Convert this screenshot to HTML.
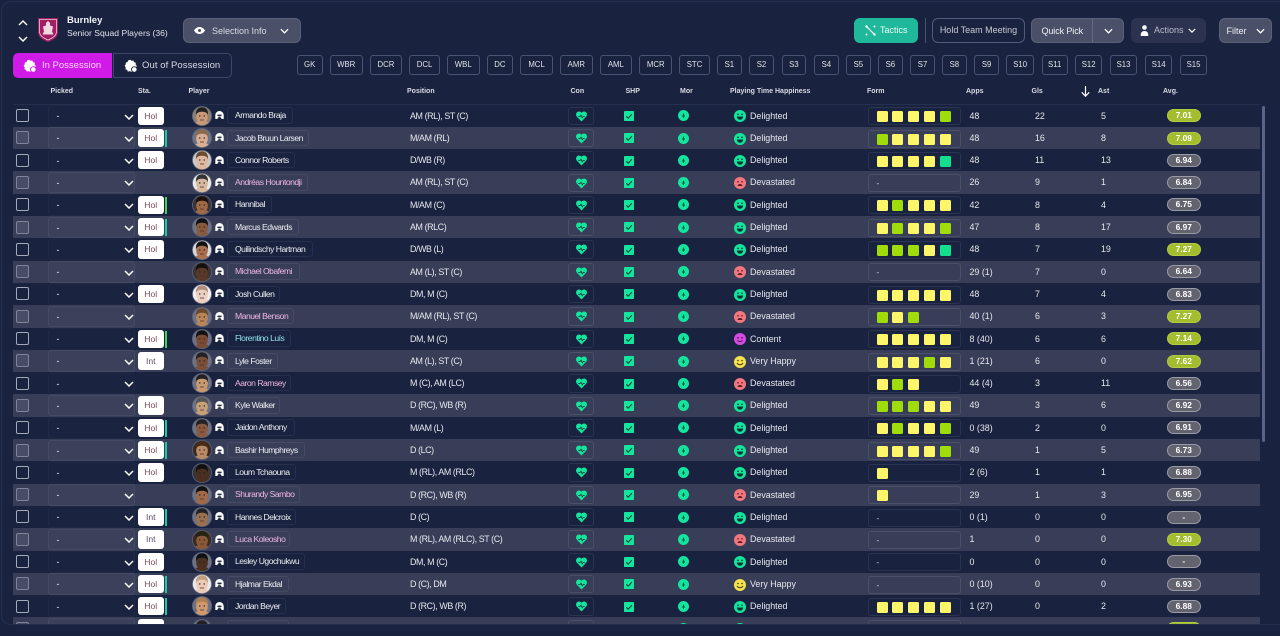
<!DOCTYPE html>
<html><head><meta charset="utf-8"><title>Burnley Squad</title>
<style>
*{box-sizing:border-box}
html,body{margin:0;padding:0;width:1280px;height:636px;overflow:hidden;background:#19223e;font-family:"Liberation Sans",sans-serif;color:#e6e8ee}
.wrap{position:absolute;left:0;top:0;width:1280px;height:636px;overflow:hidden;filter:blur(.3px)}
.frame{position:absolute;left:1px;top:1px;width:1290px;height:624px;border:1px solid #252e4c;border-radius:10px}
.abs,.btn,.pos,.h,.t{position:absolute}
.btn{top:18px;height:25px;border-radius:6px;font-size:9px;line-height:25px;white-space:nowrap}
.gr{background:#4a5068;border:1px solid #596079}
.btn svg{position:absolute}
.pos{top:55px;height:20px;border:1.5px solid #4a5372;border-radius:3px;font-size:7.8px;line-height:17px;text-align:center;color:#dfe2ea}
.h{top:87px;font-size:7px;font-weight:bold;color:#d9dce6;line-height:9px;white-space:nowrap}
.line{position:absolute;left:13px;top:104px;width:1247px;height:1px;background:#262f4d}
.table{position:absolute;left:13px;top:104.6px;width:1247px;height:519.4px;overflow:hidden}
.r{position:absolute;left:0;width:1247px;height:22.3px;font-size:8.8px}
.r.o{background:#383e58}
.r>*{position:absolute;font-style:normal;font-weight:normal}
.cb{left:3px;top:4.5px;width:13px;height:13px;border:1px solid #a4a9b8;border-radius:2px}
.o .cb{background:#474d66;border-color:#7f8599}
.sel{left:34.5px;top:.5px;width:87px;height:21.5px;border:1px solid #1f2844;border-radius:3px;background:#1a2340;padding:5px 8px;line-height:11px}
.o .sel{background:#3b415b;border-color:#454b65}
.sel svg{position:absolute;left:75px;top:7.5px;width:10px;height:6px}
.st{left:125px;top:2px;width:25.5px;height:18.3px;background:#fff;border-radius:3px;color:#7a4b58;text-align:center;line-height:18.3px;font-size:8.6px}
.st.i{color:#5b4c62}
.bar{left:151.7px;top:3px;width:2.6px;height:17px;background:#1cc9a8}
.bar.g{background:#3fd45a}
.av{left:178.5px;top:1.3px;width:20px;height:20px}
.pi{left:201.5px;top:6.5px;width:9px;height:8px}
.nm{left:214px;top:2.7px;height:16.4px;border:1px solid #262f4e;border-radius:3px;padding-left:7px;line-height:14.4px;font-size:8.6px;letter-spacing:-.5px;white-space:nowrap;color:#eceef2}
.o .nm{border-color:#454b66}
.nm.p{color:#eeb6e4}.nm.c{color:#8fe0ea}
.ps{left:397px;top:0;line-height:22px;font-size:8.9px;letter-spacing:-.4px;white-space:nowrap}
.con{left:555.3px;top:2.1px;width:26px;height:18.3px;border:1px solid #2a3350;border-radius:3px}
.o .con{border-color:#4a5068}
.con svg{position:absolute;left:6.7px;top:3px;width:11px;height:11px}
.sh{left:611px;top:6.4px;width:10px;height:10px}
.mo{left:665px;top:5.7px;width:11px;height:11px}
.fc{left:721px;top:5.7px;width:12px;height:12px}
.hp{left:737px;top:0;line-height:22px;font-size:8.9px;white-space:nowrap}
.fm{left:854.5px;top:2.7px;width:93px;height:18px;border:1px solid #2a3350;border-radius:3px;display:flex;gap:4.9px;padding:3px 0 0 8px;font-size:8px;line-height:11px;color:#d8dbe4}
.o .fm{border-color:#4a5068}
.fm u{display:block;width:11px;height:11px;border-radius:1.5px;background:#fdf66a;text-decoration:none}
.fm u.l{background:#9fdc0a}.fm u.g{background:#12e08e}
.a1,.a2,.a3{top:0;line-height:22px;font-size:8.9px;white-space:nowrap}
.a1{left:956.5px}.a2{left:1022px}.a3{left:1088px}
.av2{left:1154px;top:4.7px;width:33.5px;height:13px;border-radius:7px;background:#62636f;border:1px solid #9a9ba5;text-align:center;font-size:8.4px;line-height:11px;color:#fff;font-weight:bold!important}
.av2.l{background:#a3bd2f;border-color:#b3cb45}
.sb{position:absolute;left:1262px;top:106px;width:3px;height:336px;border-radius:2px;background:#5b6488}
</style></head><body>
<svg width="0" height="0" style="position:absolute">
<symbol id="ch" viewBox="0 0 10 6"><polyline points="1,1 5,5 9,1" fill="none" stroke="#fff" stroke-width="1.5"/></symbol>
<symbol id="up" viewBox="0 0 10 6"><polyline points="1,5 5,1 9,5" fill="none" stroke="#fff" stroke-width="1.4"/></symbol>
<symbol id="pi" viewBox="0 0 9 8"><path d="M.3 8V4.2C.3 1.8 2.2 0 4.5 0s4.2 1.8 4.2 4.2V8H6.6C6.4 6.6 5.6 6 4.5 6S2.6 6.6 2.4 8z" fill="#fff"/><path d="M2.4 3.6h4.2v1.2c-.7.5-1.4.7-2.1.7s-1.4-.2-2.1-.7z" fill="#20294a"/></symbol>
<symbol id="he" viewBox="0 0 12 12"><path d="M6 11.5.9 6.1C-.5 4.5-.1 2 1.700 1c1.600-.9 3.300-.3 4.300 1 1-1.300 2.700-1.900 4.300-1 1.800 1 2.200 3.500.8 5.100z" fill="#13e69c"/><polyline points="2.500,6 4.500,6 5.500,4.500 6.800,7.500 7.800,6 9.500,6" fill="none" stroke="#1a2340" stroke-width=".8"/></symbol>
<symbol id="sh" viewBox="0 0 10 10"><rect width="10" height="10" rx=".8" fill="#13e69c"/><polyline points="2.300,5.300 4.200,7.200 7.800,3.200" fill="none" stroke="#14433f" stroke-width="1.100"/></symbol>
<symbol id="mo" viewBox="0 0 11 11"><circle cx="5.500" cy="5.500" r="5.500" fill="#13e69c"/><path d="M5.500 3 7 6.600H4z" fill="#13554c"/><rect x="5.100" y="6" width=".8" height="2" fill="#13554c"/></symbol>
<symbol id="fd" viewBox="0 0 12 12"><circle cx="6" cy="6" r="6" fill="#13e69c"/><circle cx="4" cy="4.300" r=".8" fill="#123"/><circle cx="8" cy="4.300" r=".8" fill="#123"/><path d="M2.800 6.500h6.400C9 8.500 7.700 9.700 6 9.700S3 8.500 2.800 6.500z" fill="#133"/></symbol>
<symbol id="fr" viewBox="0 0 12 12"><circle cx="6" cy="6" r="6" fill="#f2777f"/><circle cx="4" cy="4.800" r=".8" fill="#5a1a22"/><circle cx="8" cy="4.800" r=".8" fill="#5a1a22"/><path d="M3.500 9c.4-1.500 1.300-2 2.500-2s2.100.5 2.500 2z" fill="#5a1a22"/></symbol>
<symbol id="fc" viewBox="0 0 12 12"><circle cx="6" cy="6" r="6" fill="#d54be0"/><circle cx="4" cy="4.800" r=".8" fill="#3a1040"/><circle cx="8" cy="4.800" r=".8" fill="#3a1040"/><path d="M3.500 7.500c1.500 1.300 3.500 1.300 5 0" fill="none" stroke="#3a1040" stroke-width=".9"/></symbol>
<symbol id="fv" viewBox="0 0 12 12"><circle cx="6" cy="6" r="6" fill="#f4e24f"/><circle cx="4" cy="4.500" r=".8" fill="#443a10"/><circle cx="8" cy="4.500" r=".8" fill="#443a10"/><path d="M3 7c1.500 2.300 4.500 2.300 6 0" fill="none" stroke="#443a10" stroke-width="1"/></symbol>
<symbol id="av" viewBox="0 0 20 20"><circle cx="10" cy="10" r="10" fill="#5c6277"/><clipPath id="cc"><circle cx="10" cy="10" r="9.200"/></clipPath><g clip-path="url(#cc)"><rect width="20" height="20" style="fill:var(--b,#6d7286)"/><path d="M2 20c.5-4 3-5 8-5s7.500 1 8 5z" style="fill:var(--s)"/><ellipse cx="10" cy="10.500" rx="5.800" ry="7.300" style="fill:var(--s)"/><path d="M4 9.500C3.500 3 7 1.300 10 1.300S16.500 3 16 9.500c-.6-2.800-2.500-3.800-6-3.800S4.600 6.700 4 9.500z" style="fill:var(--h)"/><circle cx="7.800" cy="10" r=".7" fill="#222"/><circle cx="12.200" cy="10" r=".7" fill="#222"/><path d="M8 14h4" stroke="#5a2a20" stroke-width=".8"/></g></symbol>
<symbol id="gr" viewBox="0 0 14 14"><path d="M6 .8l1.500 1 1.800-.3.800 1.600 1.700.7-.2 1.800L13 7l-1.300 1.300L11 11l-2 .2-1.500 1.700-1.800-.8-1.800.5-.8-1.700-1.700-.8.3-1.800L.6 6.800 1.800 5.400 1.700 3.600l1.800-.6.800-1.600z" fill="#fff"/><circle cx="10.300" cy="10.500" r="2.800" fill="#fff" style="stroke:var(--n);stroke-width:.9"/></symbol>
</svg>
<div class="wrap">
<div class="frame"></div>

<svg class="abs" style="left:18px;top:20px;width:10px;height:6px"><use href="#up"/></svg>
<svg class="abs" style="left:18px;top:35.500px;width:10px;height:6px"><use href="#ch"/></svg>
<svg class="abs" style="left:38px;top:18px;width:20px;height:24px" viewBox="0 0 20 24"><path d="M0 0h20v14c0 5-4 8-10 10C4 22 0 19 0 14z" fill="#a01f62"/><path d="M1.500 1.500h17v12c0 4-3.500 6.500-8.500 8.500-5-2-8.500-4.500-8.500-8.500z" fill="none" stroke="#e9c7d6" stroke-width=".8"/><path d="M10 3l2 2v2.500l3 1-1 5 1.500 3H4.500L6 13.500l-1-5 3-1V5z" fill="#f1d9e4"/></svg>
<div class="abs" style="left:67px;top:15px;font-size:9.500px;font-weight:bold;line-height:11px;color:#f0f1f5">Burnley</div>
<div class="abs" style="left:67px;top:28px;font-size:8.600px;line-height:11px;color:#dfe1e8;white-space:nowrap">Senior Squad Players (36)</div>

<div class="btn gr" style="left:183px;width:118px;color:#d8dbe4"><svg style="left:10px;top:8px;width:11px;height:7px" viewBox="0 0 11 7"><path d="M0 3.500C1.500 1 3.500 0 5.500 0s4 1 5.500 3.500C9.500 6 7.500 7 5.500 7S1.500 6 0 3.500z" fill="#fff"/><circle cx="5.500" cy="3.500" r="1.500" fill="#4a5068"/></svg><span style="position:absolute;left:28px">Selection Info</span><svg style="left:96px;top:9px;width:9px;height:6px"><use href="#ch"/></svg></div>

<div class="btn" style="left:854px;width:64px;background:#1fb89a;color:#eafff9"><svg style="left:11px;top:7px;width:11px;height:11px" viewBox="0 0 11 11"><path d="M2 2l7 7" stroke="#fff" stroke-width="1.200"/><circle cx="1.500" cy="1.500" r="1.200" fill="#fff"/><circle cx="9.500" cy="1.500" r="1" fill="#fff"/><circle cx="1.500" cy="9.500" r="1" fill="#fff"/><circle cx="9.500" cy="9.500" r="1.200" fill="#fff"/></svg><span style="position:absolute;left:26px">Tactics</span></div>
<div class="abs" style="left:924.500px;top:18px;width:1px;height:25px;background:#4a5270"></div>
<div class="btn" style="left:932px;width:93px;border:1.500px solid #525a7a;line-height:22px;text-align:center;color:#c9ccd6">Hold Team Meeting</div>
<div class="btn gr" style="left:1031px;width:93px;color:#eef0f4"><span style="position:absolute;left:9.500px;letter-spacing:-.1px">Quick Pick</span><span style="position:absolute;left:60px;top:0;height:23px;width:1px;background:#646b84"></span><svg style="left:72px;top:9px;width:9px;height:6px"><use href="#ch"/></svg></div>
<div class="btn" style="left:1131px;width:75px;background:#2b3350;color:#b9bdca"><svg style="left:9px;top:7px;width:9px;height:11px" viewBox="0 0 9 11"><circle cx="4.500" cy="2.500" r="2.300" fill="#fff"/><path d="M.8 11c-.4-3 1-5 3.700-5s4.100 2 3.700 5z" fill="#fff"/></svg><span style="position:absolute;left:23px">Actions</span><svg style="left:57px;top:9.500px;width:8px;height:5px"><use href="#ch"/></svg></div>
<div class="btn gr" style="left:1219px;width:53px;color:#eef0f4"><span style="position:absolute;left:6.500px">Filter</span><svg style="left:35.500px;top:9px;width:9px;height:6px"><use href="#ch"/></svg></div>

<div class="abs" style="left:13px;top:53px;width:99px;height:25px;background:#d01ae8;border-radius:5px 0 0 5px;font-size:9.500px;line-height:25px;color:#f8d6fc;--n:#d01ae8"><svg style="position:absolute;left:10px;top:6px;width:14px;height:14px"><use href="#gr"/></svg><span style="position:absolute;left:29px">In Possession</span></div>
<div class="abs" style="left:113px;top:53px;width:119px;height:25px;border:1px solid #3d4666;border-radius:0 5px 5px 0;font-size:9.500px;line-height:23px;color:#d8dbe4;--n:#19223e"><svg style="position:absolute;left:10px;top:5px;width:14px;height:14px"><use href="#gr"/></svg><span style="position:absolute;left:28px;white-space:nowrap;letter-spacing:.07px">Out of Possession</span></div>

<div class="pos" style="left:296.700px;width:26px">GK</div>
<div class="pos" style="left:329.700px;width:33px">WBR</div>
<div class="pos" style="left:370px;width:32px">DCR</div>
<div class="pos" style="left:409px;width:31px">DCL</div>
<div class="pos" style="left:447px;width:32.500px">WBL</div>
<div class="pos" style="left:486.700px;width:26.500px">DC</div>
<div class="pos" style="left:520.300px;width:32.500px">MCL</div>
<div class="pos" style="left:560px;width:32.700px">AMR</div>
<div class="pos" style="left:599.700px;width:32.300px">AML</div>
<div class="pos" style="left:639.300px;width:33px">MCR</div>
<div class="pos" style="left:679.300px;width:30.500px">STC</div>
<div class="pos" style="left:717px;width:24.700px">S1</div>
<div class="pos" style="left:749px;width:25px">S2</div>
<div class="pos" style="left:781.500px;width:24.700px">S3</div>
<div class="pos" style="left:814px;width:24.700px">S4</div>
<div class="pos" style="left:846px;width:24.700px">S5</div>
<div class="pos" style="left:878px;width:24.700px">S6</div>
<div class="pos" style="left:910.300px;width:24.500px">S7</div>
<div class="pos" style="left:942px;width:24.700px">S8</div>
<div class="pos" style="left:974.300px;width:24.700px">S9</div>
<div class="pos" style="left:1006.300px;width:27.700px">S10</div>
<div class="pos" style="left:1041.700px;width:26px">S11</div>
<div class="pos" style="left:1075px;width:27.300px">S12</div>
<div class="pos" style="left:1109.700px;width:27.700px">S13</div>
<div class="pos" style="left:1145px;width:27.300px">S14</div>
<div class="pos" style="left:1179.700px;width:27.700px">S15</div>

<div class="h" style="left:50.500px">Picked</div><div class="h" style="left:138px">Sta.</div><div class="h" style="left:188.500px">Player</div><div class="h" style="left:407px">Position</div><div class="h" style="left:570.500px">Con</div><div class="h" style="left:625.500px">SHP</div><div class="h" style="left:680px">Mor</div><div class="h" style="left:730px">Playing Time Happiness</div><div class="h" style="left:867px">Form</div><div class="h" style="left:966px">Apps</div><div class="h" style="left:1031.500px">Gls</div><div class="h" style="left:1098px">Ast</div><div class="h" style="left:1163px">Avg.</div>
<svg class="abs" style="left:1081px;top:86px;width:9px;height:11px" viewBox="0 0 9 11"><path d="M4.500 0v10M.8 6.300l3.700 3.900 3.700-3.900" fill="none" stroke="#fff" stroke-width="1.200"/></svg>

<div class="line"></div>
<div class="table">
<div class="r" style="top:0"><i class="cb"></i><i class="sel">-<svg><use href="#ch"/></svg></i><i class="st">Hol</i><svg class="av" style="--s:#c89a78;--h:#222;--b:#8a8078"><use href="#av"/></svg><svg class="pi"><use href="#pi"/></svg><i class="nm" style="width:65.500px">Armando Braja</i><i class="ps">AM (RL), ST (C)</i><i class="con"><svg><use href="#he"/></svg></i><svg class="sh"><use href="#sh"/></svg><svg class="mo"><use href="#mo"/></svg><svg class="fc"><use href="#fd"/></svg><i class="hp">Delighted</i><i class="fm"><u></u><u></u><u></u><u></u><u class="l"></u></i><i class="a1">48</i><i class="a2">22</i><i class="a3">5</i><i class="av2 l">7.01</i></div>
<div class="r o" style="top:22.300px"><i class="cb"></i><i class="sel">-<svg><use href="#ch"/></svg></i><i class="st">Hol</i><i class="bar"></i><svg class="av" style="--s:#d8ae94;--h:#8a6a4a"><use href="#av"/></svg><svg class="pi"><use href="#pi"/></svg><i class="nm" style="width:81.500px">Jacob Bruun Larsen</i><i class="ps">M/AM (RL)</i><i class="con"><svg><use href="#he"/></svg></i><svg class="sh"><use href="#sh"/></svg><svg class="mo"><use href="#mo"/></svg><svg class="fc"><use href="#fd"/></svg><i class="hp">Delighted</i><i class="fm"><u class="l"></u><u></u><u></u><u></u><u></u></i><i class="a1">48</i><i class="a2">16</i><i class="a3">8</i><i class="av2 l">7.09</i></div>
<div class="r" style="top:44.600px"><i class="cb"></i><i class="sel">-<svg><use href="#ch"/></svg></i><i class="st">Hol</i><svg class="av" style="--s:#e0b8a0;--h:#6a4a30;--b:#c8c8cc"><use href="#av"/></svg><svg class="pi"><use href="#pi"/></svg><i class="nm" style="width:67.500px">Connor Roberts</i><i class="ps">D/WB (R)</i><i class="con"><svg><use href="#he"/></svg></i><svg class="sh"><use href="#sh"/></svg><svg class="mo"><use href="#mo"/></svg><svg class="fc"><use href="#fd"/></svg><i class="hp">Delighted</i><i class="fm"><u></u><u></u><u></u><u></u><u class="g"></u></i><i class="a1">48</i><i class="a2">11</i><i class="a3">13</i><i class="av2">6.94</i></div>
<div class="r o" style="top:66.900px"><i class="cb"></i><i class="sel">-<svg><use href="#ch"/></svg></i><svg class="av" style="--s:#d8b8a0;--h:#333;--b:#e8e8ea"><use href="#av"/></svg><svg class="pi"><use href="#pi"/></svg><i class="nm p" style="width:81px">Andréas Hountondji</i><i class="ps">AM (RL), ST (C)</i><i class="con"><svg><use href="#he"/></svg></i><svg class="sh"><use href="#sh"/></svg><svg class="mo"><use href="#mo"/></svg><svg class="fc"><use href="#fr"/></svg><i class="hp">Devastated</i><i class="fm">-</i><i class="a1">26</i><i class="a2">9</i><i class="a3">1</i><i class="av2">6.84</i></div>
<div class="r" style="top:89.200px"><i class="cb"></i><i class="sel">-<svg><use href="#ch"/></svg></i><i class="st">Hol</i><i class="bar g"></i><svg class="av" style="--s:#a06a48;--h:#1a1010;--b:#3a3436"><use href="#av"/></svg><svg class="pi"><use href="#pi"/></svg><i class="nm" style="width:44.500px">Hannibal</i><i class="ps">M/AM (C)</i><i class="con"><svg><use href="#he"/></svg></i><svg class="sh"><use href="#sh"/></svg><svg class="mo"><use href="#mo"/></svg><svg class="fc"><use href="#fd"/></svg><i class="hp">Delighted</i><i class="fm"><u></u><u class="l"></u><u></u><u></u><u></u></i><i class="a1">42</i><i class="a2">8</i><i class="a3">4</i><i class="av2">6.75</i></div>
<div class="r o" style="top:111.500px"><i class="cb"></i><i class="sel">-<svg><use href="#ch"/></svg></i><i class="st">Hol</i><i class="bar"></i><svg class="av" style="--s:#8a5a40;--h:#111"><use href="#av"/></svg><svg class="pi"><use href="#pi"/></svg><i class="nm" style="width:71.500px">Marcus Edwards</i><i class="ps">AM (RLC)</i><i class="con"><svg><use href="#he"/></svg></i><svg class="sh"><use href="#sh"/></svg><svg class="mo"><use href="#mo"/></svg><svg class="fc"><use href="#fd"/></svg><i class="hp">Delighted</i><i class="fm"><u></u><u class="l"></u><u></u><u></u><u class="l"></u></i><i class="a1">47</i><i class="a2">8</i><i class="a3">17</i><i class="av2">6.97</i></div>
<div class="r" style="top:133.800px"><i class="cb"></i><i class="sel">-<svg><use href="#ch"/></svg></i><i class="st">Hol</i><svg class="av" style="--s:#a87050;--h:#111;--b:#d8d8dc"><use href="#av"/></svg><svg class="pi"><use href="#pi"/></svg><i class="nm" style="width:85.500px">Quilindschy Hartman</i><i class="ps">D/WB (L)</i><i class="con"><svg><use href="#he"/></svg></i><svg class="sh"><use href="#sh"/></svg><svg class="mo"><use href="#mo"/></svg><svg class="fc"><use href="#fd"/></svg><i class="hp">Delighted</i><i class="fm"><u class="l"></u><u class="l"></u><u class="l"></u><u></u><u class="g"></u></i><i class="a1">48</i><i class="a2">7</i><i class="a3">19</i><i class="av2 l">7.27</i></div>
<div class="r o" style="top:156.100px"><i class="cb"></i><i class="sel">-<svg><use href="#ch"/></svg></i><svg class="av" style="--s:#5a3828;--h:#111;--b:#3a3436"><use href="#av"/></svg><svg class="pi"><use href="#pi"/></svg><i class="nm p" style="width:72.500px">Michael Obafemi</i><i class="ps">AM (L), ST (C)</i><i class="con"><svg><use href="#he"/></svg></i><svg class="sh"><use href="#sh"/></svg><svg class="mo"><use href="#mo"/></svg><svg class="fc"><use href="#fr"/></svg><i class="hp">Devastated</i><i class="fm">-</i><i class="a1">29 (1)</i><i class="a2">7</i><i class="a3">0</i><i class="av2">6.64</i></div>
<div class="r" style="top:178.400px"><i class="cb"></i><i class="sel">-<svg><use href="#ch"/></svg></i><i class="st">Hol</i><svg class="av" style="--s:#eed0c0;--h:#b09080;--b:#eeeef0"><use href="#av"/></svg><svg class="pi"><use href="#pi"/></svg><i class="nm" style="width:53px">Josh Cullen</i><i class="ps">DM, M (C)</i><i class="con"><svg><use href="#he"/></svg></i><svg class="sh"><use href="#sh"/></svg><svg class="mo"><use href="#mo"/></svg><svg class="fc"><use href="#fd"/></svg><i class="hp">Delighted</i><i class="fm"><u></u><u></u><u></u><u></u><u></u></i><i class="a1">48</i><i class="a2">7</i><i class="a3">4</i><i class="av2">6.83</i></div>
<div class="r o" style="top:200.700px"><i class="cb"></i><i class="sel">-<svg><use href="#ch"/></svg></i><svg class="av" style="--s:#b8865a;--h:#6a4a2a"><use href="#av"/></svg><svg class="pi"><use href="#pi"/></svg><i class="nm p" style="width:67px">Manuel Benson</i><i class="ps">M/AM (RL), ST (C)</i><i class="con"><svg><use href="#he"/></svg></i><svg class="sh"><use href="#sh"/></svg><svg class="mo"><use href="#mo"/></svg><svg class="fc"><use href="#fr"/></svg><i class="hp">Devastated</i><i class="fm"><u class="l"></u><u></u><u class="l"></u></i><i class="a1">40 (1)</i><i class="a2">6</i><i class="a3">3</i><i class="av2 l">7.27</i></div>
<div class="r" style="top:223px"><i class="cb"></i><i class="sel">-<svg><use href="#ch"/></svg></i><i class="st">Hol</i><i class="bar g"></i><svg class="av" style="--s:#7a4a34;--h:#111"><use href="#av"/></svg><svg class="pi"><use href="#pi"/></svg><i class="nm c" style="width:63.500px">Florentino Luís</i><i class="ps">DM, M (C)</i><i class="con"><svg><use href="#he"/></svg></i><svg class="sh"><use href="#sh"/></svg><svg class="mo"><use href="#mo"/></svg><svg class="fc"><use href="#fc"/></svg><i class="hp">Content</i><i class="fm"><u></u><u></u><u></u><u></u><u></u></i><i class="a1">8 (40)</i><i class="a2">6</i><i class="a3">6</i><i class="av2 l">7.14</i></div>
<div class="r o" style="top:245.300px"><i class="cb"></i><i class="sel">-<svg><use href="#ch"/></svg></i><i class="st i">Int</i><svg class="av" style="--s:#7a4e38;--h:#222"><use href="#av"/></svg><svg class="pi"><use href="#pi"/></svg><i class="nm" style="width:50.500px">Lyle Foster</i><i class="ps">AM (L), ST (C)</i><i class="con"><svg><use href="#he"/></svg></i><svg class="sh"><use href="#sh"/></svg><svg class="mo"><use href="#mo"/></svg><svg class="fc"><use href="#fv"/></svg><i class="hp">Very Happy</i><i class="fm"><u></u><u></u><u></u><u class="l"></u><u></u></i><i class="a1">1 (21)</i><i class="a2">6</i><i class="a3">0</i><i class="av2 l">7.62</i></div>
<div class="r" style="top:267.600px"><i class="cb"></i><i class="sel">-<svg><use href="#ch"/></svg></i><svg class="av" style="--s:#c89a70;--h:#222"><use href="#av"/></svg><svg class="pi"><use href="#pi"/></svg><i class="nm p" style="width:63.500px">Aaron Ramsey</i><i class="ps">M (C), AM (LC)</i><i class="con"><svg><use href="#he"/></svg></i><svg class="sh"><use href="#sh"/></svg><svg class="mo"><use href="#mo"/></svg><svg class="fc"><use href="#fr"/></svg><i class="hp">Devastated</i><i class="fm"><u></u><u class="l"></u><u></u></i><i class="a1">44 (4)</i><i class="a2">3</i><i class="a3">11</i><i class="av2">6.56</i></div>
<div class="r o" style="top:289.900px"><i class="cb"></i><i class="sel">-<svg><use href="#ch"/></svg></i><i class="st">Hol</i><svg class="av" style="--s:#c8a078;--h:#555"><use href="#av"/></svg><svg class="pi"><use href="#pi"/></svg><i class="nm" style="width:53px">Kyle Walker</i><i class="ps">D (RC), WB (R)</i><i class="con"><svg><use href="#he"/></svg></i><svg class="sh"><use href="#sh"/></svg><svg class="mo"><use href="#mo"/></svg><svg class="fc"><use href="#fd"/></svg><i class="hp">Delighted</i><i class="fm"><u class="l"></u><u class="l"></u><u class="l"></u><u></u><u></u></i><i class="a1">49</i><i class="a2">3</i><i class="a3">6</i><i class="av2">6.92</i></div>
<div class="r" style="top:312.200px"><i class="cb"></i><i class="sel">-<svg><use href="#ch"/></svg></i><i class="st">Hol</i><i class="bar"></i><svg class="av" style="--s:#8a5a40;--h:#222"><use href="#av"/></svg><svg class="pi"><use href="#pi"/></svg><i class="nm" style="width:67.500px">Jaidon Anthony</i><i class="ps">M/AM (L)</i><i class="con"><svg><use href="#he"/></svg></i><svg class="sh"><use href="#sh"/></svg><svg class="mo"><use href="#mo"/></svg><svg class="fc"><use href="#fd"/></svg><i class="hp">Delighted</i><i class="fm"><u></u><u class="l"></u><u></u><u></u><u class="l"></u></i><i class="a1">0 (38)</i><i class="a2">2</i><i class="a3">0</i><i class="av2">6.91</i></div>
<div class="r o" style="top:334.500px"><i class="cb"></i><i class="sel">-<svg><use href="#ch"/></svg></i><i class="st">Hol</i><i class="bar"></i><svg class="av" style="--s:#b88a68;--h:#4a2a18;--b:#3a2a22"><use href="#av"/></svg><svg class="pi"><use href="#pi"/></svg><i class="nm" style="width:77.500px">Bashir Humphreys</i><i class="ps">D (LC)</i><i class="con"><svg><use href="#he"/></svg></i><svg class="sh"><use href="#sh"/></svg><svg class="mo"><use href="#mo"/></svg><svg class="fc"><use href="#fd"/></svg><i class="hp">Delighted</i><i class="fm"><u></u><u></u><u></u><u></u><u class="l"></u></i><i class="a1">49</i><i class="a2">1</i><i class="a3">5</i><i class="av2">6.73</i></div>
<div class="r" style="top:356.800px"><i class="cb"></i><i class="sel">-<svg><use href="#ch"/></svg></i><i class="st">Hol</i><svg class="av" style="--s:#4a2e20;--h:#111;--b:#3a3436"><use href="#av"/></svg><svg class="pi"><use href="#pi"/></svg><i class="nm" style="width:68.500px">Loum Tchaouna</i><i class="ps">M (RL), AM (RLC)</i><i class="con"><svg><use href="#he"/></svg></i><svg class="sh"><use href="#sh"/></svg><svg class="mo"><use href="#mo"/></svg><svg class="fc"><use href="#fd"/></svg><i class="hp">Delighted</i><i class="fm"><u></u></i><i class="a1">2 (6)</i><i class="a2">1</i><i class="a3">1</i><i class="av2">6.88</i></div>
<div class="r o" style="top:379.100px"><i class="cb"></i><i class="sel">-<svg><use href="#ch"/></svg></i><svg class="av" style="--s:#a06a48;--h:#111"><use href="#av"/></svg><svg class="pi"><use href="#pi"/></svg><i class="nm p" style="width:72.500px">Shurandy Sambo</i><i class="ps">D (RC), WB (R)</i><i class="con"><svg><use href="#he"/></svg></i><svg class="sh"><use href="#sh"/></svg><svg class="mo"><use href="#mo"/></svg><svg class="fc"><use href="#fr"/></svg><i class="hp">Devastated</i><i class="fm"><u></u></i><i class="a1">29</i><i class="a2">1</i><i class="a3">3</i><i class="av2">6.95</i></div>
<div class="r" style="top:401.400px"><i class="cb"></i><i class="sel">-<svg><use href="#ch"/></svg></i><i class="st i">Int</i><i class="bar"></i><svg class="av" style="--s:#9a7050;--h:#222"><use href="#av"/></svg><svg class="pi"><use href="#pi"/></svg><i class="nm" style="width:69px">Hannes Delcroix</i><i class="ps">D (C)</i><i class="con"><svg><use href="#he"/></svg></i><svg class="sh"><use href="#sh"/></svg><svg class="mo"><use href="#mo"/></svg><svg class="fc"><use href="#fd"/></svg><i class="hp">Delighted</i><i class="fm">-</i><i class="a1">0 (1)</i><i class="a2">0</i><i class="a3">0</i><i class="av2">-</i></div>
<div class="r o" style="top:423.700px"><i class="cb"></i><i class="sel">-<svg><use href="#ch"/></svg></i><i class="st i">Int</i><svg class="av" style="--s:#8a5a38;--h:#221;--b:#3a2a22"><use href="#av"/></svg><svg class="pi"><use href="#pi"/></svg><i class="nm p" style="width:63px">Luca Koleosho</i><i class="ps">M (RL), AM (RLC), ST (C)</i><i class="con"><svg><use href="#he"/></svg></i><svg class="sh"><use href="#sh"/></svg><svg class="mo"><use href="#mo"/></svg><svg class="fc"><use href="#fr"/></svg><i class="hp">Devastated</i><i class="fm">-</i><i class="a1">1</i><i class="a2">0</i><i class="a3">0</i><i class="av2 l">7.30</i></div>
<div class="r" style="top:446px"><i class="cb"></i><i class="sel">-<svg><use href="#ch"/></svg></i><i class="st">Hol</i><svg class="av" style="--s:#4a3020;--h:#111"><use href="#av"/></svg><svg class="pi"><use href="#pi"/></svg><i class="nm" style="width:77.500px">Lesley Ugochukwu</i><i class="ps">DM, M (C)</i><i class="con"><svg><use href="#he"/></svg></i><svg class="sh"><use href="#sh"/></svg><svg class="mo"><use href="#mo"/></svg><svg class="fc"><use href="#fd"/></svg><i class="hp">Delighted</i><i class="fm">-</i><i class="a1">0</i><i class="a2">0</i><i class="a3">0</i><i class="av2">-</i></div>
<div class="r o" style="top:468.300px"><i class="cb"></i><i class="sel">-<svg><use href="#ch"/></svg></i><i class="st">Hol</i><i class="bar"></i><svg class="av" style="--s:#eccab8;--h:#c0a080;--b:#e8e8ea"><use href="#av"/></svg><svg class="pi"><use href="#pi"/></svg><i class="nm" style="width:61.500px">Hjalmar Ekdal</i><i class="ps">D (C), DM</i><i class="con"><svg><use href="#he"/></svg></i><svg class="sh"><use href="#sh"/></svg><svg class="mo"><use href="#mo"/></svg><svg class="fc"><use href="#fv"/></svg><i class="hp">Very Happy</i><i class="fm">-</i><i class="a1">0 (10)</i><i class="a2">0</i><i class="a3">0</i><i class="av2">6.93</i></div>
<div class="r" style="top:490.600px"><i class="cb"></i><i class="sel">-<svg><use href="#ch"/></svg></i><i class="st">Hol</i><i class="bar"></i><svg class="av" style="--s:#d09a70;--h:#b08050"><use href="#av"/></svg><svg class="pi"><use href="#pi"/></svg><i class="nm" style="width:59px">Jordan Beyer</i><i class="ps">D (RC), WB (R)</i><i class="con"><svg><use href="#he"/></svg></i><svg class="sh"><use href="#sh"/></svg><svg class="mo"><use href="#mo"/></svg><svg class="fc"><use href="#fd"/></svg><i class="hp">Delighted</i><i class="fm"><u></u><u></u><u></u><u></u><u></u></i><i class="a1">1 (27)</i><i class="a2">0</i><i class="a3">2</i><i class="av2">6.88</i></div>
<div class="r o" style="top:512.900px"><i class="cb"></i><i class="sel"></i><i class="st"></i><svg class="av" style="--s:#a07050;--h:#222"><use href="#av"/></svg><i class="nm" style="width:62px"></i><i class="con"></i><svg class="sh"><use href="#sh"/></svg><svg class="mo"><use href="#mo"/></svg><svg class="fc"><use href="#fd"/></svg><i class="fm"></i><i class="av2 l"></i></div>
</div>
<div class="sb"></div>
</div>
</body></html>
